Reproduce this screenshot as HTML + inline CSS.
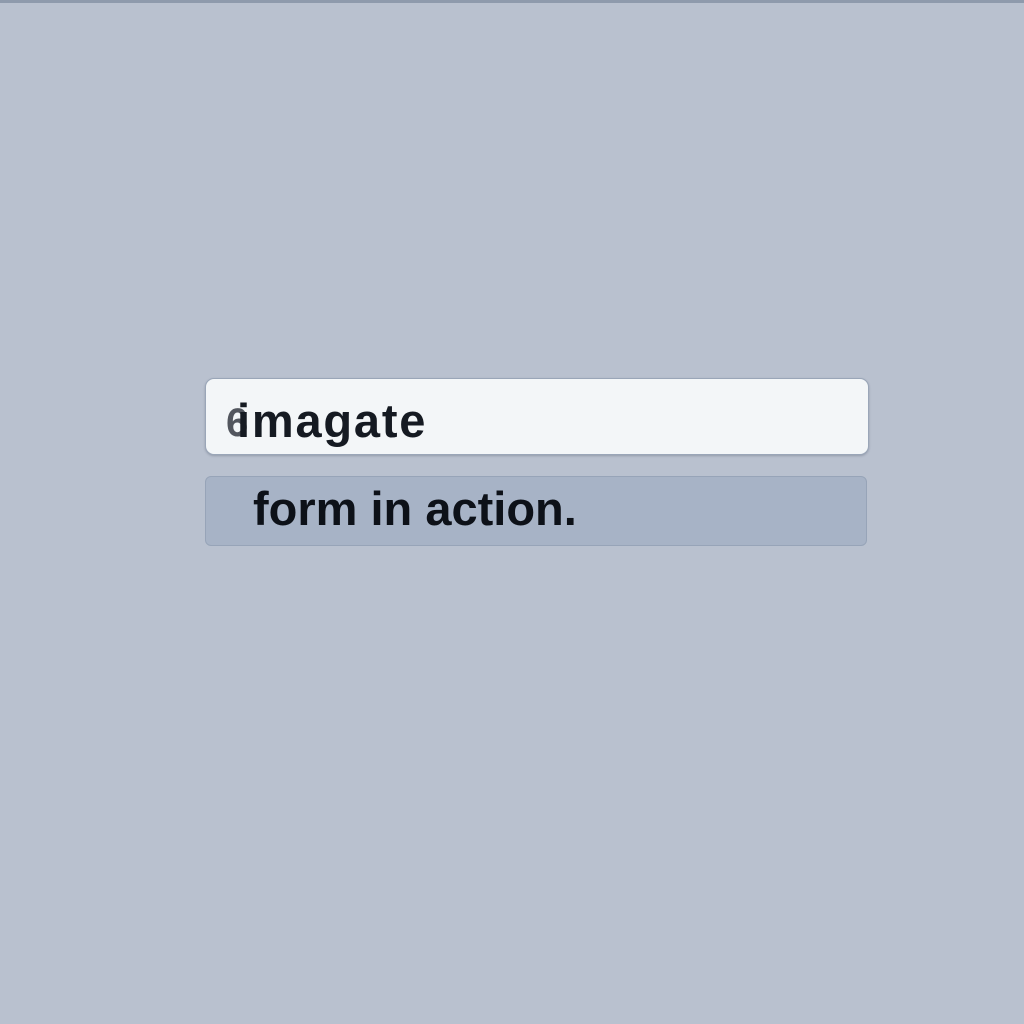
<!DOCTYPE html>
<html><head><style>
html,body{margin:0;padding:0}
body{width:1024px;height:1024px;background:#b9c1cf;position:relative;overflow:hidden;font-family:"Liberation Sans",sans-serif}
.top{position:absolute;left:0;top:0;width:1024px;height:3px;background:#8e9aac}
.in{position:absolute;left:205px;top:378px;width:664px;height:77px;box-sizing:border-box;background:#f3f6f8;border:1px solid #9aa6b8;border-radius:9px;box-shadow:0 1px 2px rgba(60,70,90,.3)}
.in span{position:absolute;left:31px;top:15px;font-size:47px;font-weight:bold;color:#151a22;letter-spacing:1.8px;line-height:54px}
.in i{position:absolute;left:20px;top:17px;font-style:normal;font-size:40px;font-weight:bold;color:#2a2f38;opacity:.8;line-height:54px}
.bt{position:absolute;left:205px;top:476px;width:662px;height:70px;box-sizing:border-box;background:#a7b3c6;border:1px solid #97a4b8;border-radius:6px}
.bt span{position:absolute;left:47px;top:2px;font-size:47px;font-weight:bold;color:#0d1118;line-height:60px}
</style></head><body>
<div class="top"></div>
<div class="in"><i>6</i><span>imagate</span></div>
<div class="bt"><span>form in action.</span></div>
</body></html>
